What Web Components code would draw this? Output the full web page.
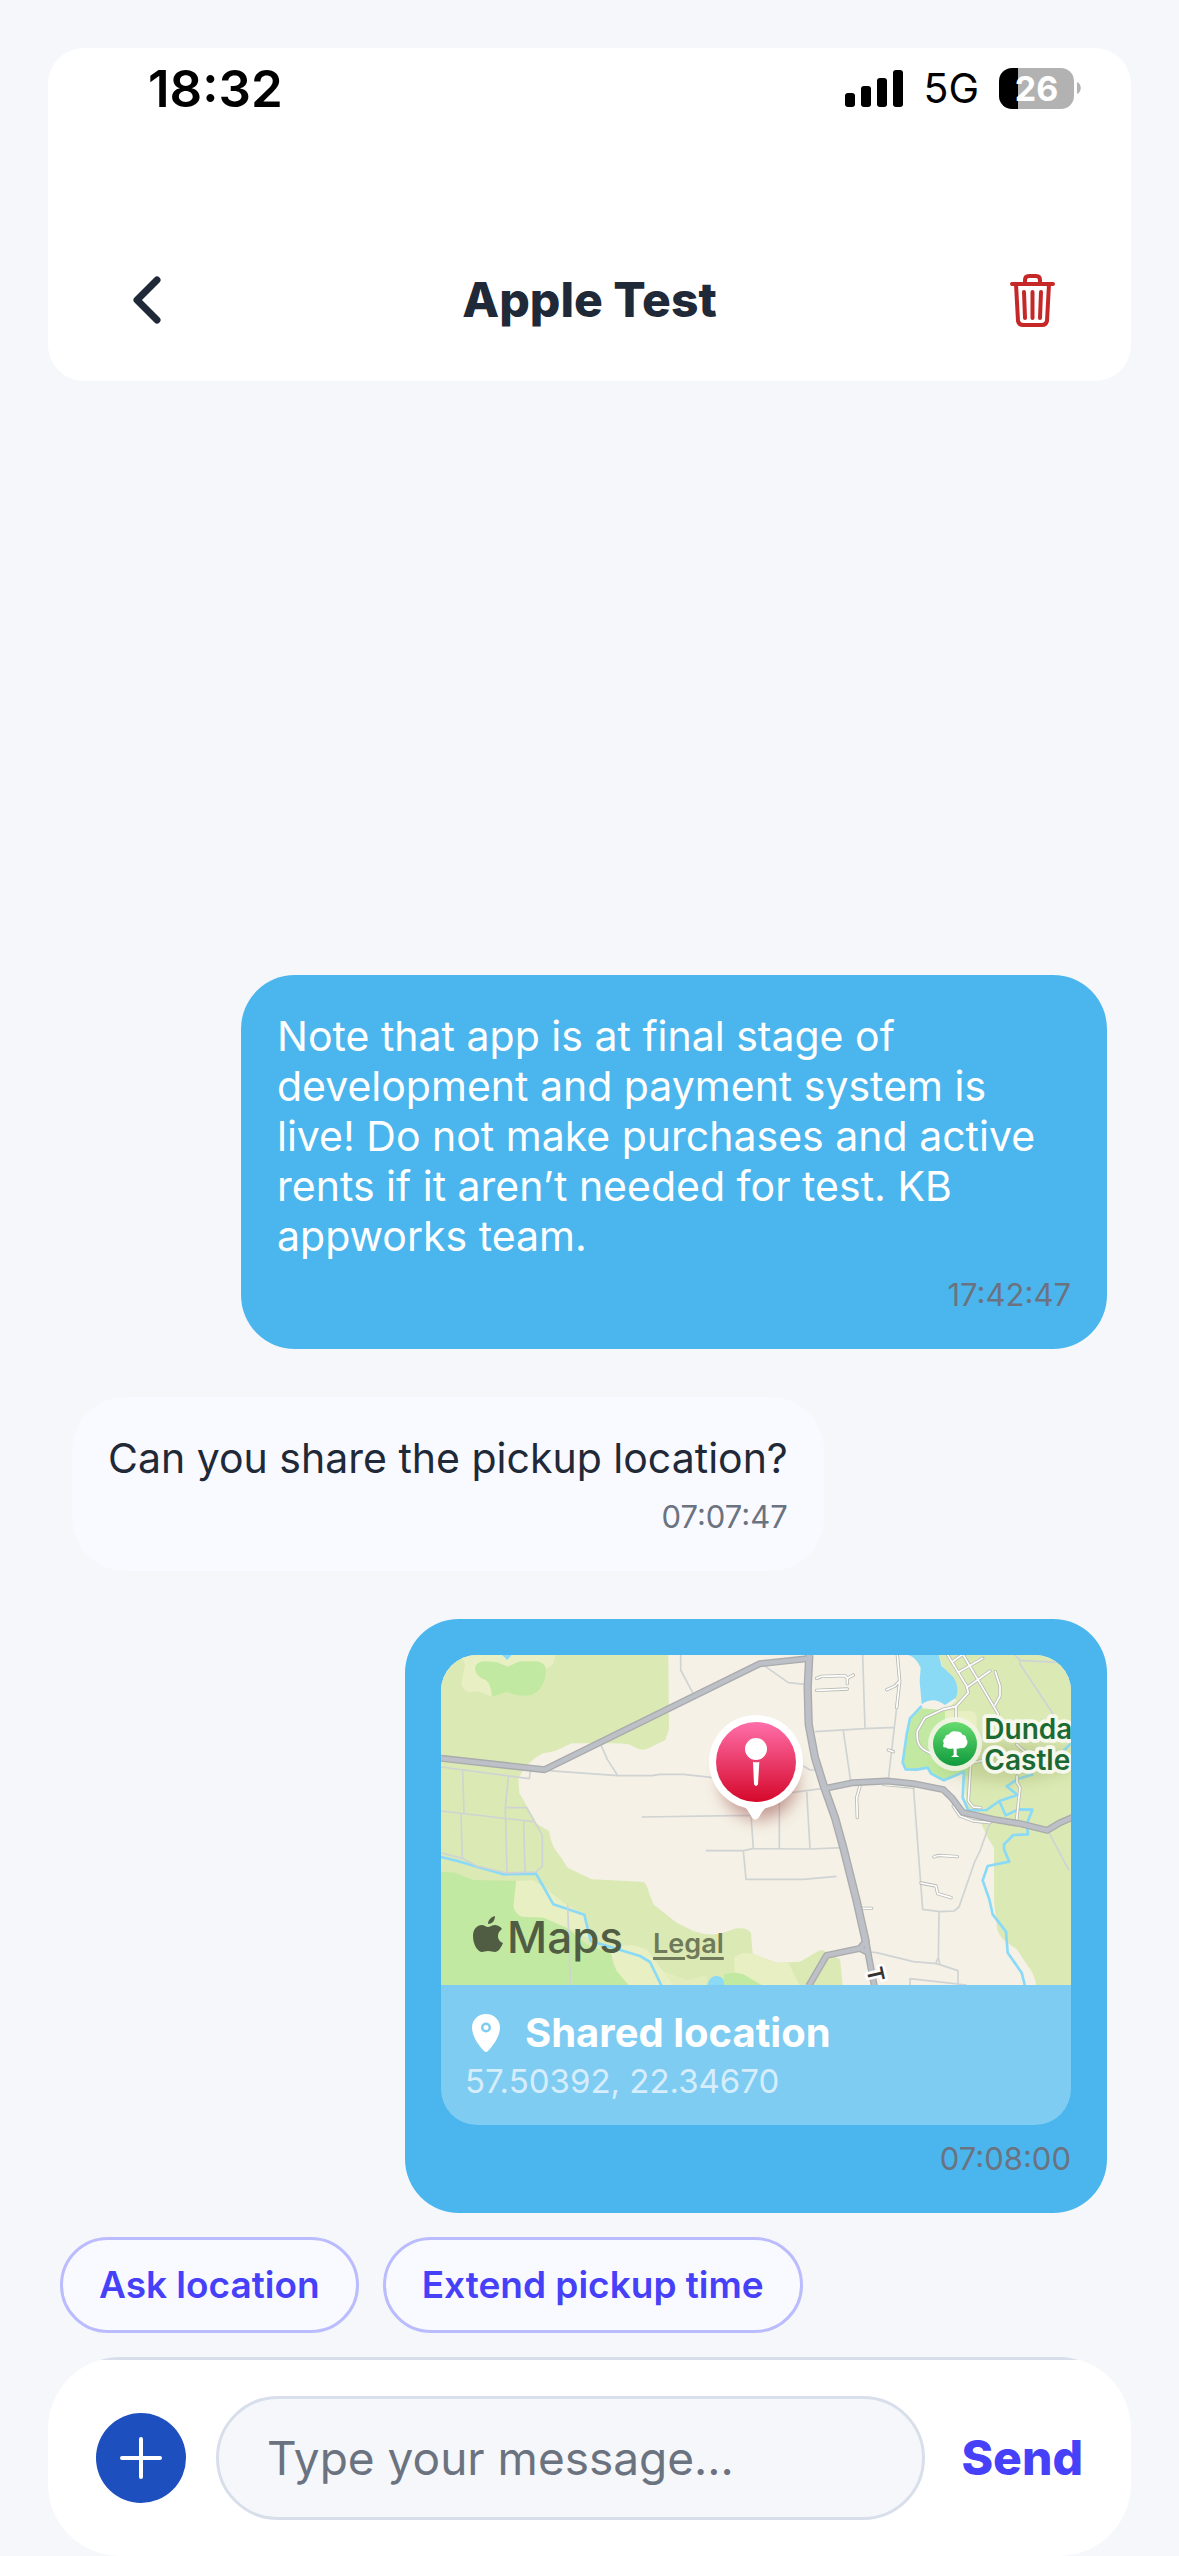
<!DOCTYPE html>
<html lang="en">
<head>
<meta charset="utf-8">
<meta name="viewport" content="width=device-width, initial-scale=1">
<title>Apple Test</title>
<style>
  body {
    margin: 0;
    background: #f5f7fb;
    font-family: Inter, "Liberation Sans", sans-serif;
    color: #1f2937;
  }
</style>
</head>
<body>
<chat-screen>
  <chat-header slot="header" heading="Apple Test">
    <status-bar time="18:32" network="5G" battery="26"></status-bar>
  </chat-header>
  <chat-bubble side="out" time="17:42:47">Note that app is at final stage of development and payment system is live! Do not make purchases and active rents if it aren’t needed for test. KB appworks team.</chat-bubble>
  <chat-bubble side="in" time="07:07:47">Can you share the pickup location?</chat-bubble>
  <chat-bubble side="out" time="07:08:00">
    <location-card coords="57.50392, 22.34670">Shared location</location-card>
  </chat-bubble>
  <quick-reply slot="replies">Ask location</quick-reply>
  <quick-reply slot="replies">Extend pickup time</quick-reply>
  <message-composer slot="composer"></message-composer>
</chat-screen>

<script>
class BaseElement extends HTMLElement {
  constructor() {
    super();
    this.attachShadow({ mode: "open" });
  }
  connectedCallback() {
    this.shadowRoot.innerHTML = this.getTemplate();
  }
}

customElements.define("chat-screen", class extends BaseElement {
  getTemplate() {
    return `
      <style>
        :host {
          display: flex;
          flex-direction: column;
          box-sizing: border-box;
          min-height: 100vh;
          padding: 48px 48px 0;
        }
        main {
          flex: 1;
          display: flex;
          flex-direction: column;
          justify-content: flex-end;
          gap: 48px;
          padding: 48px 24px 0;
        }
        .replies {
          display: flex;
          flex-wrap: wrap;
          gap: 24px;
          padding: 24px 12px;
        }
      </style>
      <slot name="header"></slot>
      <main><slot></slot></main>
      <div class="replies"><slot name="replies"></slot></div>
      <slot name="composer"></slot>
    `;
  }
});

customElements.define("status-bar", class extends BaseElement {
  getTemplate() {
    const battery = this.getAttribute("battery");
    return `
      <style>
        :host {
          display: flex;
          justify-content: space-between;
          align-items: center;
          height: 80px;
          padding: 0 50px 0 100px;
          color: #000;
        }
        .time {
          font-size: 51px;
          font-weight: 600;
        }
        .right {
          display: flex;
          align-items: center;
          gap: 20px;
          font-size: 41px;
        }
        .battery {
          display: flex;
          align-items: center;
          gap: 3px;
        }
        .level {
          display: grid;
          place-items: center;
          width: 75px;
          height: 41px;
          border-radius: 13px;
          background: linear-gradient(to right, #000 ${battery}%, #b2b2b2 ${battery}%);
          color: #fff;
          font-size: 34px;
          font-weight: 700;
        }
        svg { display: block; }
      </style>
      <span class="time">${this.getAttribute("time")}</span>
      <div class="right">
        <svg width="58" height="37" viewBox="0 0 58 37" aria-hidden="true">
          <rect x="0" y="23" width="10" height="14" rx="3"/>
          <rect x="16" y="16" width="10" height="21" rx="3"/>
          <rect x="32" y="8" width="10" height="29" rx="3"/>
          <rect x="48" y="0" width="10" height="37" rx="3"/>
        </svg>
        <span>${this.getAttribute("network")}</span>
        <div class="battery">
          <span class="level">${battery}</span>
          <svg width="4" height="12" viewBox="0 0 4 12" fill="#b2b2b2" aria-hidden="true"><path d="M0 0c5 2 5 10 0 12z"/></svg>
        </div>
      </div>
    `;
  }
});

customElements.define("chat-header", class extends BaseElement {
  getTemplate() {
    return `
      <style>
        :host {
          display: flex;
          flex-direction: column;
          gap: 124px;
          padding-bottom: 33px;
          border-radius: 36px;
          background: #fff;
        }
        .bar {
          display: grid;
          grid-template-columns: 96px 1fr 96px;
          align-items: center;
          height: 96px;
          margin: 0 51px;
        }
        h1 {
          margin: 0;
          text-align: center;
          font-size: 48px;
          line-height: 60px;
          font-weight: 800;
        }
        button {
          display: grid;
          place-items: center;
          height: 96px;
          margin: 0;
          padding: 0;
          border: 0;
          background: none;
          color: #1f2937;
        }
        .delete { color: #c62828; }
        svg {
          display: block;
          fill: none;
          stroke: currentColor;
          stroke-linecap: round;
          stroke-linejoin: round;
        }
      </style>
      <slot></slot>
      <div class="bar">
        <button type="button" aria-label="Back">
          <svg width="28" height="48" viewBox="0 0 28 48" stroke-width="7"><path d="M24 4 4 24l20 20"/></svg>
        </button>
        <h1>${this.getAttribute("heading")}</h1>
        <button type="button" class="delete" aria-label="Delete chat">
          <svg width="45" height="53" viewBox="0 0 45 53" stroke-width="4">
            <path d="M2 10h41M6 10l2 37q1 4 5 4h19q4 0 5-4l2-37M15 9V6q0-4 4-4h7q4 0 4 4v3"/>
            <path d="m14 18 1 26M22.500 18v26M31 18l-1 26"/>
          </svg>
        </button>
      </div>
    `;
  }
});

customElements.define("chat-bubble", class extends BaseElement {
  getTemplate() {
    return `
      <style>
        :host {
          display: flex;
          flex-direction: column;
          align-self: flex-start;
          gap: 16px;
          box-sizing: border-box;
          max-width: 866px;
          padding: 36px;
          border-radius: 54px;
          background: #f9faff;
          font-size: 41px;
          line-height: 50px;
        }
        :host([side="out"]) {
          align-self: flex-end;
          background: #4bb6ed;
          color: #fff;
        }
        time {
          align-self: flex-end;
          color: #6b7280;
          font-size: 31px;
          line-height: 36px;
        }
      </style>
      <div><slot></slot></div>
      <time>${this.getAttribute("time")}</time>
    `;
  }
});

customElements.define("location-map", class extends BaseElement {
  getTemplate() {
    return `
      <style>
        :host {
          display: block;
          position: relative;
          height: 330px;
          overflow: hidden;
          background: #f5f1e6;
        }
        svg { display: block; }
        .map {
          width: 100%;
          height: 100%;
        }
        .credit {
          position: absolute;
          left: 32px;
          bottom: 14px;
          display: flex;
          align-items: baseline;
          gap: 30px;
          line-height: 54px;
        }
        .brand {
          display: flex;
          align-items: baseline;
          gap: 4px;
          color: #515d43;
          font-size: 44px;
          font-weight: 500;
        }
        a {
          color: #707958;
          font-size: 27px;
          font-weight: 600;
          text-decoration-thickness: 3px;
          text-underline-offset: 4px;
        }
      </style>
      <svg class="map" viewBox="123 162 1890 990" preserveAspectRatio="xMidYMid slice" fill="none" stroke-linejoin="round" aria-hidden="true">
        <defs>
          <linearGradient id="red" x1="0" y1="0" x2="0" y2="1"><stop stop-color="#ff6fa9"/><stop offset="1" stop-color="#d5082b"/></linearGradient>
          <linearGradient id="leaf" x1="0" y1="0" x2="0" y2="1"><stop stop-color="#65db6e"/><stop offset="1" stop-color="#109a3d"/></linearGradient>
          <filter id="blur" x="-50%" y="-50%" width="200%" height="200%"><feGaussianBlur stdDeviation="24"/></filter>
          <g id="main-roads">
            <path d="M123 472 434 506 1080 188 1232 172"/>
            <path d="M1273 563 1360 545 1460 540 1540 548 1630 566 1655 590 1688 634 1780 655 1860 668 1942 688 1980 665 2020 648"/>
            <path d="M1398 1020 1380 1042 1280 1063 1226 1155M1380 1042 1405 1055M1398 1020 1405 1060 1423 1155"/>
          </g>
          <path id="trunk-road" d="M1228 162 1223 260 1226 370 1245 470 1273 560 1305 650 1330 740 1370 900 1398 1025"/>
          <g id="streets">
            <path d="m1250 232 15-6 70-2 7 8 18-10M1342 232v16M1250 268l92-4M1492 162l7 78-9 80M1499 240l-14 15-25 11"/>
            <path d="m1380 555-10 35 2 60M1450 550l90 8M1602 768q8-6 28-4l42 3M1563 846l45 9 5 23 40 12M1380 922h35M1465 447l15 5"/>
            <path d="m1643 162 57 93 5 20-37 41v44M1690 162l105 178M1660 180l25-18M1678 212l70-40M1700 260l70-50M1786 212l14 43v30l-15 27"/>
            <path d="m1668 316-38 9-55 25-23 40q-4 40 18 55l35 20M1712 490l-7 110 15 18 22 2M1710 487l40-9M1850 430l10 10 15 12M1851 525v20l9 15-10 95M1660 615l20 30 40 15 50 5"/>
          </g>
        </defs>
        <g fill="#dbe9b4">
          <path d="M123 162H805L807 385 796 417 742 443Q725 450 708 440L685 430Q660 425 600 427L515 427 465 450 430 457Q400 470 370 505L355 535 358 577 375 605 410 668 447 690Q455 740 480 765L503 800 575 835 725 842Q735 842 740 855L760 910 830 965 880 990Q920 1005 960 998L1010 982Q1045 980 1053 997L1058 1058 1130 1085 1200 1082 1255 1050Q1270 1044 1279 1055L1320 1075 1328 1152H123Z"/>
          <path d="M1615 162H2020V1152H1908Q1905 1120 1880 1090L1850 1045 1815 1020Q1790 1000 1790 970L1782 900V740L1760 705 1745 670 1700 630 1694 530 1640 400 1635 328 1668 300Z"/>
        </g>
        <g fill="#e8efc3">
          <path d="M180 162H465Q464 195 440 203L300 200 276 287 232 270 208 274Q190 270 183 250L195 190Z"/>
          <path d="M348 840 400 838 440 865 500 912 553 941 572 1015 520 990 430 950 365 947Q340 935 340 915Z"/>
          <path d="M630 1050Q650 1030 700 1033L740 1045 820 1152H685L650 1110Z"/>
          <path d="M750 1075 790 1110 860 1137 920 1122V1152H780Z" opacity=".6"/>
          <path d="M1003 1070Q1020 1050 1058 1058L1125 1085 1165 1085 1198 1152H1080L1003 1112Z"/>
          <path d="M1635 330H1710Q1730 330 1730 350V420L1710 430 1635 380Z"/>
        </g>
        <g fill="#c2e9a1">
          <path d="M225 200Q230 183 250 181L290 183 323 197 360 181H410Q437 185 438 208 435 265 395 282 360 290 320 272L276 288Q272 245 258 238 225 225 225 200Z"/>
          <path d="M123 812 165 815Q190 825 220 837L348 840 340 915Q345 940 365 947L430 950 500 980 560 1030 635 1060Q635 1090 650 1110L685 1152H123Z"/>
          <path d="M972 1152V1120Q1000 1112 1030 1120L1085 1152Z"/>
          <path d="M1565 322 1635 328V380L1700 420 1710 530 1680 515 1632 538 1595 520 1580 500 1525 508 1505 485 1520 400 1528 355Z"/>
        </g>
        <g fill="#8adaf6">
          <path d="M1525 162H1616L1625 195 1660 228Q1680 260 1668 290L1635 312Q1600 285 1565 310L1559 240 1562 200Q1550 170 1525 162Z"/>
          <path d="M306 162 322 177 335 162ZM922 1152Q928 1128 945 1125 970 1125 972 1142V1152Z"/>
        </g>
        <g stroke="#8adaf7" stroke-width="8">
          <path d="M123 768 180 782 310 820 408 818 460 910 553 941 572 1020 720 1065 750 1083 785 1155"/>
          <path d="M1565 315 1530 352 1520 400 1508 485 1517 505 1550 506 1583 500 1593 518 1632 538 1692 512 1688 590 1705 628 1760 627 1798 600 1852 582 1820 556 1855 533 1900 520"/>
          <path d="M1798 600 1817 643 1855 625 1897 626 1880 670 1884 700 1840 702 1812 730V745L1828 782 1763 795 1748 838 1768 895 1778 940 1818 992 1823 1055 1865 1115 1875 1155M1960 480 2020 420"/>
        </g>
        <g stroke="#cfd3d3" stroke-width="5">
          <path d="M123 498 388 533 391 508M188 508 192 637M325 525 316 620 321 815M316 620H380L427 703V795L408 813 320 816 230 795 187 772 123 756M123 630 400 662M183 640 187 772M371 662 375 813"/>
          <path d="M434 508 653 524H755L780 520H850L940 530M602 430 622 475 653 524M842 162V207L878 275M1087 190 1165 245 1215 250M725 648 1053 643 1060 743M917 749H1030L1060 743 1230 744 1328 740M1030 750 1038 835H1210L1310 826M1138 605V743M1175 575 1270 562M503 912 511 1152"/>
          <path d="M1388 162 1395 383M1245 392 1395 383 1485 379M1330 390 1352 540M1490 320 1465 535M1540 555 1568 925 1620 932 1662 930 1677 918 1725 780 1740 750 1770 665M1617 932 1615 1070 1607 1088M1615 1070 1620 1090M1408 1053 1430 1055 1540 1082 1610 1088 1674 1109V1152M1530 1152V1133L1700 1152"/>
          <path d="M1858 178 1970 184M1845 162 1860 178V190L1960 340M1948 697 2007 808M1220 572 1230 743M1210 495 1230 507H1252"/>
        </g>
        <use href="#streets" stroke="#b9bab3" stroke-width="10" stroke-linecap="round"/>
        <use href="#streets" stroke="#fff" stroke-width="5" stroke-linecap="round"/>
        <use href="#main-roads" stroke="#a9abad" stroke-width="21"/>
        <use href="#trunk-road" stroke="#a9abad" stroke-width="25"/>
        <use href="#main-roads" stroke="#bdc0c6" stroke-width="13"/>
        <use href="#trunk-road" stroke="#bdc0c6" stroke-width="17"/>

        <circle cx="1078" cy="540" r="115" fill="#9c5450" opacity=".55" filter="url(#blur)"/>
        <path d="M1000 595Q1035 610 1050 640 1066 672 1082 640 1097 612 1136 595Z" fill="#fff"/>
        <circle cx="1068" cy="483" r="141" fill="#fff"/>
        <circle cx="1068" cy="483" r="120" fill="url(#red)"/>
        <circle cx="1068" cy="444" r="33" fill="#fff"/>
        <path d="M1059 482Q1068 485 1078 482L1074 550Q1068 560 1062 550Z" fill="#fff"/>

        <ellipse cx="1820" cy="480" rx="200" ry="60" fill="#8a9a50" opacity=".3" filter="url(#blur)"/>
        <circle cx="1665" cy="429" r="81" fill="#f3f5e8" opacity=".85"/>
        <circle cx="1665" cy="429" r="66" fill="url(#leaf)"/>
        <g fill="#fff">
          <path d="M1652 440Q1642 442 1638 436 1628 440 1634 426 1628 418 1638 412 1636 404 1648 402 1656 390 1668 394 1682 392 1686 404 1698 404 1696 414 1704 422 1696 434 1690 442 1680 438 1672 444 1664 436 1658 442 1652 440Z" stroke="#fff" stroke-width="5"/>
          <path d="M1661 434 1653 430 1661 446V462L1653 468H1678L1670 462V436Z"/>
        </g>
        <g font-family="Inter, sans-serif" font-size="84" font-weight="600" fill="#1c6a33" stroke="#f6f8ee" stroke-width="22" paint-order="stroke">
          <text x="1753" y="415">Dundas</text>
          <text x="1753" y="507">Castle</text>
        </g>
        <text transform="translate(1399 1104) rotate(77)" font-family="Inter, sans-serif" font-size="66" font-weight="600" fill="#333" stroke="#fff" stroke-width="16" paint-order="stroke">T</text>
      </svg>
      <div class="credit">
        <span class="brand">
          <svg width="30" height="37" viewBox="0 0 30 37" fill="currentColor" aria-hidden="true">
            <path d="M22 0c0 5-3 8-7 8 0-4 3-7 7-8zM15 11c2 0 4-2 7-2 2 0 5 1 7 4-6 4-5 12 1 14-2 5-5 9-8 9-2 0-4-1-7-1s-4 1-6 1C5 36 0 29 0 20 0 13 4 9 9 9c2 0 4 2 6 2z"/>
          </svg>
          <span>Maps</span>
        </span>
        <a href="#legal">Legal</a>
      </div>
    `;
  }
});

customElements.define("location-card", class extends BaseElement {
  getTemplate() {
    return `
      <style>
        :host {
          display: block;
          width: 630px;
          max-width: 100%;
          border-radius: 36px;
          overflow: hidden;
          background: #7fccf3;
        }
        .caption { padding: 24px; }
        .title {
          display: flex;
          align-items: center;
          gap: 18px;
          font-size: 40px;
          line-height: 48px;
          font-weight: 700;
        }
        svg {
          flex: none;
          display: block;
        }
        .coords {
          margin-top: 4px;
          color: #d6edfb;
          font-size: 33px;
          line-height: 40px;
        }
      </style>
      <location-map></location-map>
      <div class="caption">
        <div class="title">
          <svg width="42" height="42" viewBox="0 0 42 42" aria-hidden="true">
            <path fill="#fff" fill-rule="evenodd" d="M21 2C13 2 7 8 7 15.500 7 24 14 34 19 39q2 2 4 0C28 34 35 24 35 15.500 35 8 29 2 21 2zM21 10.500a5 5 0 1 1 0 10 5 5 0 0 1 0-10z"/>
            <circle cx="21" cy="15.500" r="2.500" fill="#fff"/>
          </svg>
          <span><slot></slot></span>
        </div>
        <div class="coords">${this.getAttribute("coords")}</div>
      </div>
    `;
  }
});

customElements.define("quick-reply", class extends BaseElement {
  getTemplate() {
    return `
      <style>
        :host { display: block; }
        button {
          height: 96px;
          margin: 0;
          padding: 0 36px;
          border: 3px solid #bbbcfd;
          border-radius: 48px;
          background: #f9faff;
          color: #4640f8;
          font: 600 37px/48px Inter, "Liberation Sans", sans-serif;
        }
      </style>
      <button type="button"><slot></slot></button>
    `;
  }
});

customElements.define("message-composer", class extends BaseElement {
  getTemplate() {
    return `
      <style>
        :host { display: block; }
        form {
          display: flex;
          align-items: center;
          gap: 30px;
          margin: 0;
          padding: 39px 48px 36px;
          border-radius: 72px;
          background: linear-gradient(#d8dfeb 3px, #fff 3px);
        }
        button {
          flex: none;
          margin: 0;
          border: 0;
          font-family: inherit;
        }
        .add {
          display: grid;
          place-items: center;
          width: 90px;
          height: 90px;
          padding: 0;
          border-radius: 50%;
          background: #1e4fbf;
        }
        input {
          flex: 1;
          min-width: 0;
          box-sizing: border-box;
          height: 124px;
          margin: 0;
          padding: 0 48px;
          border: 3px solid #d8dfeb;
          border-radius: 62px;
          background: #f5f7fb;
          color: #1f2937;
          font: 400 46px/60px Inter, "Liberation Sans", sans-serif;
        }
        input::placeholder {
          color: #6b7280;
          opacity: 1;
        }
        .send {
          padding: 0 0 0 6px;
          background: none;
          color: #4640f8;
          font-size: 48px;
          line-height: 60px;
          font-weight: 800;
        }
      </style>
      <form>
        <button type="button" class="add" aria-label="Add attachment">
          <svg width="42" height="42" viewBox="0 0 42 42" fill="none" stroke="#fff" stroke-width="4" stroke-linecap="round"><path d="M21 2v38M2 21h38"/></svg>
        </button>
        <input type="text" placeholder="Type your message..." aria-label="Type your message">
        <button type="button" class="send">Send</button>
      </form>
    `;
  }
});
</script>
</body>
</html>
